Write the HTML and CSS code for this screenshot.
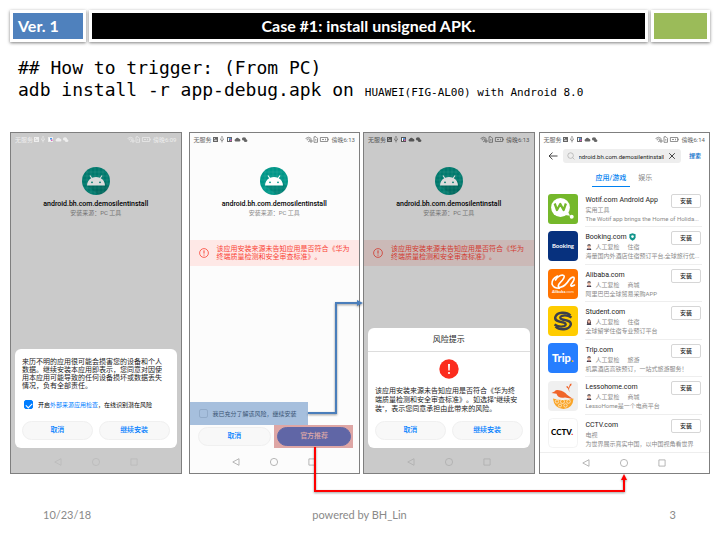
FILE: index.html
```html
<!DOCTYPE html>
<html lang="zh-CN">
<head>
<meta charset="utf-8">
<meta name="viewport" content="width=device-width, initial-scale=1">
<title>Case #1: install unsigned APK.</title>
<link rel="stylesheet" href="styles.css">
</head>
<body>
<svg class="defs" aria-hidden="true">
  <defs>
    <symbol id="notify" viewBox="0 0 36 7">
      <path fill="currentColor" fill-rule="evenodd" d="M1 1h5v5H1zM2 4.800h3L4 3.200l-.7.8-.5-.5zM2 2v.8h1V2z"/>
      <path fill="none" stroke="currentColor" stroke-width=".6" d="M10 .5v6M8.500 2.500v1.300L10 5l1.500-1.300V2.500M9.300 1.300 10 .5l.7.800"/>
      <path fill="currentColor" d="M15 1h5v5h-5z"/><path fill="#fff" d="M16 2h1v3h-1z"/><path fill="#4b9ce8" d="M17 2h2v1.500h-2z"/><path fill="#d965b8" d="M18 3.500h1.500V5H18z"/>
      <path fill="currentColor" d="M23.500 5.500a1.300 1.300 0 0 1 0-2.500 1.900 1.900 0 0 1 3.500-.3 1.450 1.450 0 0 1 .5 2.800z"/>
      <ellipse cx="32" cy="2.900" rx="2.100" ry="1.700" fill="currentColor"/><ellipse cx="33.600" cy="4.700" rx="1.800" ry="1.400" fill="currentColor"/>
    </symbol>
    <symbol id="signal" viewBox="0 0 26 7">
      <g fill="none" stroke="currentColor" stroke-width=".7"><path d="M.6 2.500Q3.500 0 6.400 2.500M1.700 3.600Q3.500 2.200 5.300 3.600M2.800 4.700l.8.9 1-.9M5 4v2h2V4z"/><path d="M9 .8h2l1.500 1.500v4H9zM10.800 3v1.700"/><path d="M15.400 1.500h7.200v4h-7.200zM23.400 2.700v1.600M17 3.500h2M20.500 2.700v1.600"/></g>
    </symbol>
    <symbol id="android" viewBox="0 0 28 28">
      <circle cx="14" cy="14" r="14" fill="var(--teal)"/>
      <path fill="none" stroke="#fff" stroke-opacity=".16" stroke-width=".5" d="M5 4v20M9 1v26M13 0v28M17 0v28M21 2v24M25 6v16M4 5h20M1 9h26M0 13h28M0 17h28M2 21h24M6 25h16"/>
      <path fill="#000" opacity=".12" d="M5 18.500 17 28a14 14 0 0 0 10-8l-5-6z"/>
      <path fill="var(--robot)" d="M5 18.500q.2-4.800 4.200-7.200L7.500 8.700l.9-.5 1.700 2.600q3.900-1.500 7.800 0l1.700-2.600.9.500-1.700 2.600q4 2.400 4.200 7.200z"/>
      <circle cx="10" cy="15.300" r=".9" fill="var(--teal)"/><circle cx="18" cy="15.300" r=".9" fill="var(--teal)"/>
    </symbol>
    <symbol id="alert" viewBox="0 0 10 10"><circle cx="5" cy="5" r="4.400" fill="none" stroke="currentColor" stroke-width=".8"/><path stroke="currentColor" d="M5 2.400v3.200M5 6.600v1"/></symbol>
    <symbol id="nav-back" viewBox="0 0 8 8"><path fill="none" stroke="currentColor" stroke-width=".8" stroke-linejoin="round" d="M7 .7v6.600L.8 4z"/></symbol>
    <symbol id="nav-home" viewBox="0 0 8 8"><circle cx="4" cy="4" r="3.600" fill="none" stroke="currentColor" stroke-width=".8"/></symbol>
    <symbol id="nav-recent" viewBox="0 0 8 8"><path fill="none" stroke="currentColor" stroke-width=".8" d="M.9.9h6.200v6.200H.9z"/></symbol>
    <symbol id="person" viewBox="0 0 6 6"><path fill="#383b4b" d="M.6 6Q.8 4 3 4t2.400 2z"/><path fill="#fff" d="m2.300 4 .7 1.500L3.700 4z"/><circle cx="3" cy="2.500" r="1.600" fill="#edb9a1"/><path fill="#363038" d="M1.300 2.600Q1 0 3.200.2 5.200.1 4.700 2.600l-.6-1.100H2z"/><path fill="#d23b3b" d="M2.800 4.300h.4L3.300 6h-.6z"/></symbol>
    <symbol id="woman" viewBox="0 0 6 6"><path fill="#493238" d="M1 4.800Q1 0 3 .2T5 4.800z"/><path fill="#454857" d="M.6 6Q1 4 3 4t2.400 2z"/><circle cx="3" cy="2.600" r="1.300" fill="#efbba6"/><path fill="#d56662" d="m2.400 4.100.6 1 .6-1z"/></symbol>
  </defs>
</svg>

<main class="slide">
  <header class="title-bar">
    <div class="plate version">Ver. 1</div>
    <h1 class="plate heading">Case #1: install unsigned APK.</h1>
    <div class="plate marker"></div>
  </header>

  <p class="command">## How to trigger: (From PC)<br>adb install -r app-debug.apk on <small>HUAWEI(FIG-AL00) with Android 8.0</small></p>

  <div class="stage">
    <section class="phone dim night">
      <div class="status"><span>无服务</span><svg class="notify"><use href="#notify"/></svg><svg class="signal"><use href="#signal"/></svg><span>傍晚6:09</span></div>
      <div class="app"><svg class="app-icon"><use href="#android"/></svg><h2>android.bh.com.demosilentinstall</h2><p>安装来源：PC 工具</p></div>
      <div class="dialog notice">
        <p class="body-text">来历不明的应用很可能会损害您的设备和个人数据。继续安装本应用即表示，您同意对因使用本应用可能导致的任何设备损坏或数据丢失情况，负有全部责任。</p>
        <div class="check-row"><input type="checkbox" id="check-source" checked><label for="check-source">开启<a href="#">外部来源应用检查</a>，在线识别潜在风险</label></div>
        <div class="actions"><button class="pill">取消</button><button class="pill">继续安装</button></div>
      </div>
      <nav class="nav"><svg><use href="#nav-back"/></svg><svg><use href="#nav-home"/></svg><svg><use href="#nav-recent"/></svg></nav>
    </section>

    <section class="phone">
      <div class="status"><span>无服务</span><svg class="notify"><use href="#notify"/></svg><svg class="signal"><use href="#signal"/></svg><span>傍晚6:13</span></div>
      <div class="app"><svg class="app-icon"><use href="#android"/></svg><h2>android.bh.com.demosilentinstall</h2><p>安装来源：PC 工具</p></div>
      <div class="banner"><svg><use href="#alert"/></svg><p>该应用安装来源未告知应用是否符合《华为终端质量检测和安全审查标准》。</p></div>
      <div class="consent"><input type="checkbox" id="consent"><label for="consent">我已充分了解该风险，继续安装</label></div>
      <div class="choices"><button class="pill">取消</button><div class="marked"><button class="pill primary">官方推荐</button></div></div>
      <nav class="nav"><svg><use href="#nav-back"/></svg><svg><use href="#nav-home"/></svg><svg><use href="#nav-recent"/></svg></nav>
    </section>

    <section class="phone dim confirm">
      <div class="status"><span>无服务</span><svg class="notify"><use href="#notify"/></svg><svg class="signal"><use href="#signal"/></svg><span>傍晚6:13</span></div>
      <div class="app"><svg class="app-icon"><use href="#android"/></svg><h2>android.bh.com.demosilentinstall</h2><p>安装来源：PC 工具</p></div>
      <div class="banner"><svg><use href="#alert"/></svg><p>该应用安装来源未告知应用是否符合《华为终端质量检测和安全审查标准》。</p></div>
      <div class="dialog risk">
        <h3>风险提示</h3>
        <svg class="risk-icon" viewBox="0 0 20 20"><circle cx="10" cy="10" r="9.700" fill="#fb2c1d"/><path fill="#fff" d="M9 5h2l-.3 6.500H9.300z"/><circle cx="10" cy="14" r="1.100" fill="#fff"/></svg>
        <p class="body-text">该应用安装来源未告知应用是否符合《华为终端质量检测和安全审查标准》。如选择"继续安装"，表示您同意承担由此带来的风险。</p>
        <div class="actions"><button class="pill">取消</button><button class="pill">继续安装</button></div>
      </div>
      <nav class="nav"><svg><use href="#nav-back"/></svg><svg><use href="#nav-home"/></svg><svg><use href="#nav-recent"/></svg></nav>
    </section>

    <section class="phone store">
      <div class="status"><span>无服务</span><svg class="notify"><use href="#notify"/></svg><svg class="signal"><use href="#signal"/></svg><span>傍晚6:14</span></div>
      <form class="search">
        <svg class="back" viewBox="0 0 10 8"><path fill="none" stroke="#333" stroke-width=".9" d="M9.500 4H1M4.500.6 1 4l3.500 3.400"/></svg>
        <div class="search-box">
          <svg viewBox="0 0 8 8"><path fill="none" stroke="#aaa" stroke-width=".7" d="M3.600.8a2.800 2.800 0 1 0 0 5.600 2.800 2.800 0 0 0 0-5.600M5.600 5.600l1.800 1.800"/></svg>
          <input type="text" aria-label="搜索应用" value="ndroid.bh.com.demosilentinstall">
          <svg viewBox="0 0 8 8"><path stroke="#333" stroke-width=".9" d="m1.200 1.200 5.600 5.600M6.800 1.200 1.200 6.800"/></svg>
        </div>
        <button type="button">搜索</button>
      </form>
      <div class="tabs"><a class="active" href="#">应用/游戏</a><a href="#">娱乐</a></div>
      <ul class="apps">
        <li>
          <svg viewBox="0 0 30 30"><rect width="30" height="30" rx="3" fill="#75b82b"/><circle cx="12.500" cy="13.500" r="9.400" fill="#fff"/><path fill="#fff" d="m17 21 5 .8-2-4z"/><circle cx="23.700" cy="22.800" r="2" fill="#fff"/><path fill="none" stroke="#75b82b" stroke-width="2.300" stroke-linejoin="round" d="m6.700 9.500 2.300 6.500 3.300-6 3.300 6 2.300-6.500"/></svg>
          <div class="entry"><h4>Wotif.com Android App</h4><p>实用工具</p><p>The Wotif app brings the Home of Holida...</p></div><button>安装</button>
        </li>
        <li>
          <svg viewBox="0 0 30 30"><rect width="30" height="30" rx="4" fill="#07317e"/><text class="booking" x="15" y="17">Booking</text></svg>
          <div class="entry"><h4>Booking.com <svg class="shield" viewBox="0 0 7 8"><path fill="#12958c" d="M3.500.3 6.600 1.300v3.200q-.2 2-3.100 3.300Q.6 6.500.4 4.500V1.300z"/><circle cx="3.500" cy="3.600" r="1.300" fill="#fff"/></svg></h4><p><svg class="reviewer"><use href="#person"/></svg><span>人工复检</span><span>住宿</span></p><p>海量国内外酒店住宿预订平台,全球旅行优...</p></div><button>安装</button>
        </li>
        <li>
          <svg viewBox="0 0 30 30"><rect width="30" height="30" rx="4" fill="#ff7300"/><path fill="none" stroke="#fff" stroke-width="1.600" stroke-linecap="round" stroke-linejoin="round" d="M7.500 11Q10 6.500 14.500 6q3.500.5 0 5l-3.500 4q-2 3.500 1.500 3.300 5-1.300 8.500-7.300 3-4 5-2.500 1 2-3 7-1 3 3.500.5M9.500 7Q3.500 10 4 15q1.500 4.500 7.500 4.300"/><text class="alibaba" x="15" y="24">Alibaba<tspan fill-opacity=".65">.com</tspan></text></svg>
          <div class="entry"><h4>Alibaba.com</h4><p><svg class="reviewer"><use href="#person"/></svg><span>人工复检</span><span>商城</span></p><p>阿里巴巴全球贸易采购APP</p></div><button>安装</button>
        </li>
        <li>
          <svg viewBox="0 0 30 30"><rect width="30" height="30" rx="4" fill="#fc0"/><g fill="none" stroke="#3c3f4c" stroke-width="2.400"><path id="ribbon" d="M22.500 9.500C18.500 5.500 9 5.500 7.200 11.300c-.5 4 4.300 4.200 8.300 5.200 3 .8 2.800 3 .5 3.700-3 .8-6.500.2-9.500-1.700"/><use href="#ribbon" transform="rotate(180 15 15)"/></g></svg>
          <div class="entry"><h4>Student.com</h4><p><svg class="reviewer"><use href="#woman"/></svg><span>人工复检</span><span>住宿</span></p><p>全球留学住宿专业预订平台</p></div><button>安装</button>
        </li>
        <li>
          <svg viewBox="0 0 30 30"><rect width="30" height="30" rx="4" fill="#267eff"/><text class="trip" x="4" y="19">Trip<tspan fill="#ffb400">.</tspan></text></svg>
          <div class="entry"><h4>Trip.com</h4><p><svg class="reviewer"><use href="#person"/></svg><span>人工复检</span><span>旅游</span></p><p>机票酒店高铁预订，一站式旅游服务！</p></div><button>安装</button>
        </li>
        <li>
          <svg viewBox="0 0 30 30"><rect width="30" height="30" rx="4" fill="#f0f0f0"/><path fill="#f06428" d="m3.500 12 3-1.500q1.500-2 4.500-1.200 5 .5 8 4.500l6 4.200-8-1.500q-7 1.500-8.500-3.800zM21.500 11.500l-1.500-4q-2-1-1.500-2.500 2 0 2 2l1-2.500q0-2 2-2 .5 2-1.500 3L21 8z"/><path fill="#f9a529" d="M5 17.500q10 3 20.500 0-.5 10-10 10.500-9.500-.5-10.500-10.500"/><g fill="none" stroke="#fff" stroke-width=".6"><circle cx="9" cy="20.500" r="1.700"/><circle cx="14.500" cy="20.500" r="2"/><circle cx="20.500" cy="20.500" r="1.800"/><circle cx="12" cy="24.500" r="1.500"/><circle cx="17.500" cy="24.500" r="1.700"/></g></svg>
          <div class="entry"><h4>Lessohome.com</h4><p><svg class="reviewer"><use href="#person"/></svg><span>人工复检</span><span>商城</span></p><p>LessoHome是一个电商平台</p></div><button>安装</button>
        </li>
        <li>
          <svg viewBox="0 0 30 30"><rect x=".5" y=".5" width="29" height="29" rx="4" fill="#fff" stroke="#eee" stroke-width=".7"/><text class="cctv" x="3" y="17">CCTV<tspan fill="#d71920">.</tspan></text></svg>
          <div class="entry"><h4>CCTV.com</h4><p>电视</p><p>为世界展示真实中国，以中国视角看世界</p></div><button>安装</button>
        </li>
      </ul>
      <nav class="nav"><svg><use href="#nav-back"/></svg><svg><use href="#nav-home"/></svg><svg><use href="#nav-recent"/></svg></nav>
    </section>

    <svg class="connectors" viewBox="0 0 700 342" preserveAspectRatio="none" aria-hidden="true">
      <g fill="none" stroke-width="2"><path stroke="#4a7ebb" d="M298 281h28V171h22"/><path stroke="#f00" d="M305 315v44h309V348"/></g>
      <path fill="#4a7ebb" d="m347 168 6 3-6 3z"/><path fill="#f00" d="m611 348 3-6 3 6z"/>
    </svg>
  </div>

  <footer class="foot"><span>10/23/18</span><span>powered by BH_Lin</span><span>3</span></footer>
</main>
</body>
</html>
```
FILE: styles.css
```css
* { box-sizing: border-box; }
body, h1, h2, h3, h4, p, ul { margin: 0; padding: 0; }
body { background: #fff; color: #000; font-family: Roboto, "Noto Sans CJK SC", sans-serif; text-spacing-trim: space-all; }
button, input { margin: 0; font: inherit; }
button { padding: 0; border: 0; background: none; }
a { color: inherit; text-decoration: none; }
svg { display: block; flex: none; }
.defs { position: absolute; width: 0; height: 0; }

.slide { padding: 10px; }

/* Title plates */
.title-bar { display: flex; gap: 3px; }
.plate { height: 32px; border: 3px solid #fff; box-shadow: 0 1px 3px rgba(0, 0, 0, .5); color: #fff; font: 700 16px/26px Lato, sans-serif; }
.version { flex: 0 0 76px; padding-left: 5px; background: #4f81bd; }
.heading { flex: 1; background: #000; text-align: center; }
.marker { flex: 0 0 59px; background: #9bbb59; }

.command { margin: 15px 8px 31px; font: 18px/22px "DejaVu Sans Mono", monospace; }
.command small { font-size: 11px; line-height: 12px; }

/* Phones */
.stage { position: relative; display: flex; gap: 3px; }
.phone {
  --teal: #009688; --robot: #fff; --muted: #8a8a8a; --status: #666; --danger: #fa4335; --nav: #a5a5a5;
  flex: 1 1 0; min-width: 0; min-height: 342px; display: flex; flex-direction: column;
  border: 1px solid #7f7f7f; background: #fcfcfc;
}
.night { margin-right: 4px; }
.confirm { margin-right: 1px; }
.dim { --teal: #00796d; --robot: #dcdcdc; --muted: #727272; --status: #555; --danger: #d23a30; --nav: #adadad; background: #cacaca; }
.night { --status: #eee; --nav: #bababa; }

.status { display: flex; align-items: center; height: 13px; padding: 0 4px; color: var(--status); font-size: 6px; line-height: 8px; }
.notify { width: 36px; height: 7px; }
.signal { width: 26px; height: 7px; margin-left: auto; }

.app { padding-top: 21px; text-align: center; }
.app-icon { width: 28px; height: 28px; margin: 0 auto 5px; }
.app h2 { font-size: 7px; line-height: 9px; font-weight: 500; }
.app p { color: var(--muted); font-size: 6px; line-height: 8px; }

.banner { display: flex; align-items: center; gap: 8px; height: 26px; margin-top: 23px; padding: 0 9px; background: #fee8e6; color: var(--danger); font-size: 7px; line-height: 8px; }
.dim .banner { background: #cbb9b7; }
.banner svg { width: 10px; height: 10px; }

.dialog { margin: auto 4px 0; padding: 0 7px 8px; border-radius: 6px; background: #fff; }
.body-text { font-size: 7px; line-height: 8px; color: #222; }
.notice { padding-top: 9px; }
.notice .body-text { margin-right: 6px; }
.check-row { display: flex; align-items: center; gap: 5px; height: 11px; margin: 9px 0 11px 2px; font-size: 6px; line-height: 8px; }
.check-row a { color: #007dff; }
input[type="checkbox"] { appearance: none; flex: none; width: 9px; height: 9px; border: 1px solid #d5d5d5; border-radius: 2px; }
input[type="checkbox"]:checked { display: grid; place-items: center; border-color: #007dff; background: #007dff; }
input[type="checkbox"]:checked::before { content: ""; width: 5px; height: 3px; border: solid #fff; border-width: 0 0 1px 1px; transform: rotate(-45deg); }
.actions { display: grid; grid-template-columns: 1fr 1fr; gap: 6px; }
.pill { height: 19px; border: 1px solid #f0f0f0; border-radius: 10px; background: #f8f8f8; color: #007dff; font-size: 7px; line-height: 9px; font-weight: 500; }
.risk h3 { margin: 0 -7px 7px; border-bottom: 1px solid #ddd; font-size: 8px; line-height: 23px; font-weight: 400; text-align: center; color: #222; }
.risk-icon { width: 20px; height: 20px; margin: 0 auto 8px; }
.risk .body-text { line-height: 9px; margin: 0 2px 7px 0; line-break: anywhere; }

/* Highlighted choices */
.consent { position: relative; display: flex; align-items: center; align-self: flex-start; gap: 5px; width: 70%; height: 23px; margin-top: auto; padding-left: 9px; font-size: 6px; line-height: 8px; white-space: nowrap; color: #222; }
.consent::after, .marked::after { content: ""; position: absolute; inset: 0; background: rgba(79, 129, 189, .5); pointer-events: none; }
.choices { display: grid; grid-template-columns: 74fr 79fr; align-items: center; gap: 3px; padding: 0 6px 0 8px; }
.marked { position: relative; display: grid; padding: 2px 2px 2px 3px; }
.marked::after { background: rgba(192, 80, 77, .5); }
.primary { border-color: #007dff; background: #007dff; color: #fff; }

.nav { display: flex; justify-content: center; align-items: center; gap: 30px; height: 22px; margin-top: 3px; color: var(--nav); }
.nav svg { width: 8px; height: 8px; }

/* App store */
.store { background: #fff; }
.search { display: flex; align-items: center; margin: 3px 8px 0; }
.back { width: 10px; height: 8px; margin-right: 5px; }
.search-box { flex: 1; min-width: 0; display: flex; align-items: center; gap: 4px; height: 14px; padding: 0 5px 0 4px; border-radius: 3px; background: #eee; }
.search-box svg { width: 8px; height: 8px; }
.search-box input { flex: 1; min-width: 0; width: 0; height: 10px; padding: 0; border: 0; outline: 0; background: none; color: #222; font-size: 6px; line-height: 8px; }
.search button { margin-left: 8px; color: #0068c8; font-size: 6px; line-height: 8px; font-weight: 500; }
.tabs { display: flex; gap: 8px; margin: 8px 0 3px 52px; font-size: 7px; color: #888; }
.tabs a { height: 16px; line-height: 15px; }
.tabs .active { padding: 0 4px; border-bottom: 1px solid #0080f0; color: #0080f0; font-weight: 500; }
.apps { flex: 1; display: grid; grid-auto-rows: 1fr; list-style: none; }
.apps li { display: grid; grid-template-columns: 30px minmax(0, 1fr); align-items: center; column-gap: 7px; padding: 0 7px 0 8px; }
.apps li > svg { width: 30px; height: 30px; }
.entry, .apps button { grid-row: 1; }
.entry { grid-column: 2; align-self: stretch; padding: 5px 0 0 1px; border-bottom: 1px solid #eee; font-size: 6px; line-height: 9px; color: #8a8a8a; }
.entry h4 { display: flex; align-items: center; gap: 2px; font-size: 7px; line-height: 10px; font-weight: 400; color: #222; }
.entry p { display: flex; align-items: center; white-space: nowrap; }
.entry p span { margin-right: 8px; }
.shield { width: 7px; height: 8px; }
.reviewer { width: 6px; height: 6px; margin-right: 4px; }
.apps button { grid-column: 2; align-self: start; justify-self: end; width: 30px; height: 14px; margin: 4px 1px 0 0; border: 1px solid #d6d6d6; border-radius: 2px; background: #fff; font-size: 6px; line-height: 8px; font-weight: 500; color: #222; }
.apps li:last-child .entry { border-bottom: 0; }
.store .nav { height: 21px; margin: 0; border-top: 1px solid #eee; }
.booking, .alibaba, .trip, .cctv { fill: #fff; font-family: Lato, sans-serif; font-weight: 700; }
.booking { font-size: 6px; text-anchor: middle; }
.alibaba { font-size: 4px; text-anchor: middle; }
.trip { font-size: 11px; font-weight: 900; }
.cctv { fill: #000; font-size: 8px; font-weight: 900; }

.connectors { position: absolute; inset: 0; width: 100%; height: 100%; overflow: visible; pointer-events: none; filter: drop-shadow(0 1px 1px rgba(0, 0, 0, .4)); }

.foot { display: grid; grid-template-columns: 1fr auto 1fr; margin: 33px 34px 0 33px; color: #898989; font: 11px/16px Lato, sans-serif; }
.foot span:last-child { text-align: right; }
```
